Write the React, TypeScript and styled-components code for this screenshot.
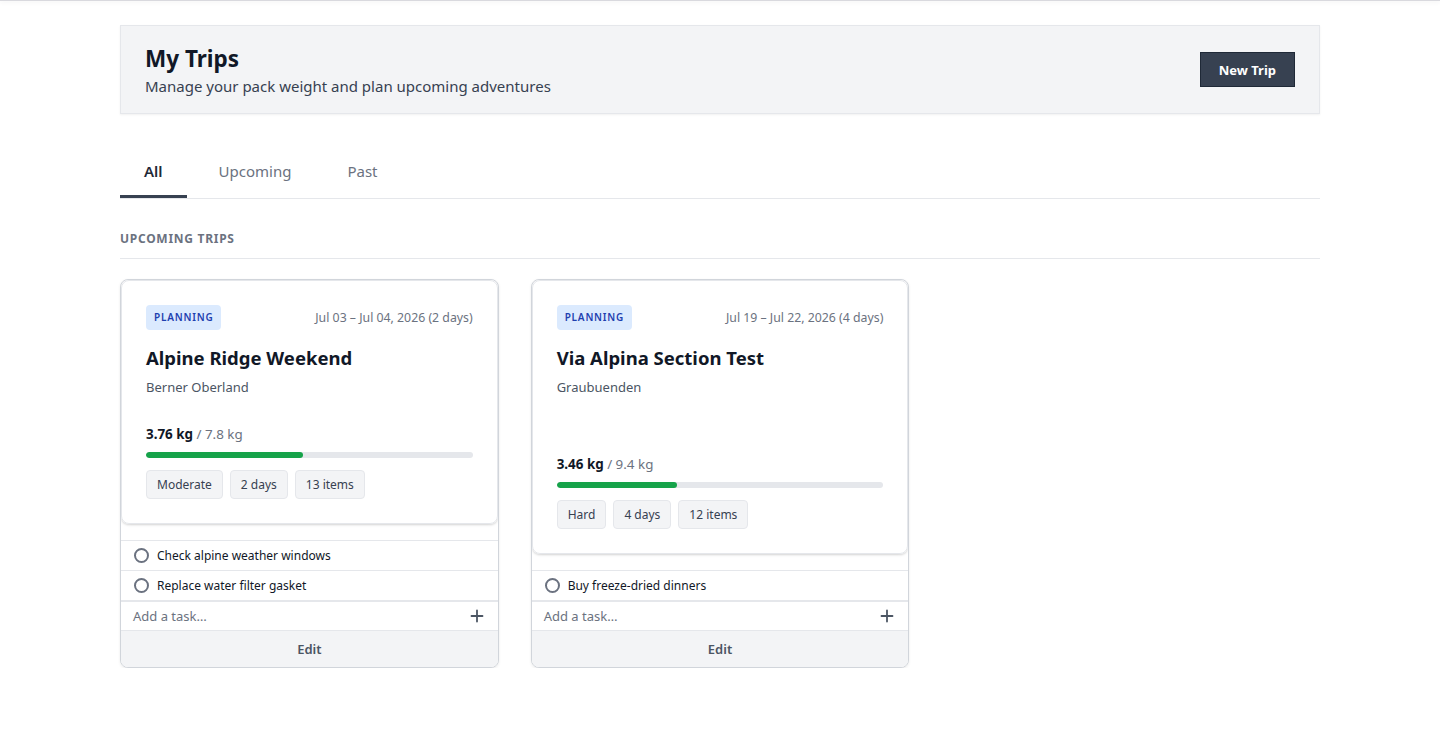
import React from "react";
import styled, { createGlobalStyle } from "styled-components";

const GlobalStyle = createGlobalStyle`
  * { box-sizing: border-box; }
  html, body { margin: 0; padding: 0; background: #ffffff; }
  body {
    font-family: "Segoe UI", "Noto Sans", "Open Sans", sans-serif;
    color: #111827;
  }
`;

const TopBar = styled.div`
  height: 1px;
  background: #d9d9de;
  box-shadow: 0 1px 4px rgba(0, 0, 0, 0.12);
`;

const Page = styled.main`
  width: 1200px;
  margin: 0 auto;
  padding-top: 24px;
`;

const HeaderBox = styled.header`
  display: flex;
  align-items: center;
  justify-content: space-between;
  height: 89px;
  background: #f3f4f6;
  border: 1px solid #e5e7eb;
  box-shadow: 0 1px 2px rgba(0, 0, 0, 0.06);
  padding: 0 24px;
`;

const HeaderText = styled.div`
  padding-top: 2px;
`;

const Title = styled.h1`
  margin: 0;
  font-size: 22.5px;
  line-height: 30px;
  font-weight: 700;
  color: #111827;
`;

const Subtitle = styled.p`
  margin: 0;
  font-size: 15px;
  line-height: 24px;
  color: #374151;
`;

const PrimaryButton = styled.button`
  height: 35px;
  padding: 0 18px;
  background: #374151;
  border: 1px solid #1f2937;
  color: #ffffff;
  font-family: inherit;
  font-size: 13px;
  font-weight: 700;
  cursor: pointer;
`;

const Tabs = styled.nav`
  display: flex;
  gap: 8px;
  margin-top: 32px;
  border-bottom: 1px solid #e5e7eb;
`;

const Tab = styled.div<{ $active?: boolean }>`
  padding: 13px 24px 12px;
  font-size: 15px;
  line-height: 24px;
  font-weight: ${(p) => (p.$active ? 600 : 400)};
  color: ${(p) => (p.$active ? "#1f2937" : "#6b7280")};
  border-bottom: 3px solid ${(p) => (p.$active ? "#374151" : "transparent")};
`;

const SectionTitle = styled.h2`
  margin: 32px 0 0;
  padding-bottom: 11px;
  border-bottom: 1px solid #e5e7eb;
  font-size: 12px;
  line-height: 16px;
  font-weight: 700;
  letter-spacing: 0.06em;
  text-transform: uppercase;
  color: #6b7280;
`;

const Grid = styled.div`
  display: grid;
  grid-template-columns: repeat(3, 1fr);
  gap: 32px;
  margin-top: 20px;
`;

const Card = styled.article`
  display: flex;
  flex-direction: column;
  border: 1px solid #d1d5db;
  border-radius: 8px;
  background: #ffffff;
  overflow: hidden;
  box-shadow: 0 1px 3px rgba(0, 0, 0, 0.08);
`;

const CardBody = styled.div`
  flex: 1;
  display: flex;
  flex-direction: column;
  padding: 24px;
  border: 1px solid #e5e7eb;
  border-radius: 8px;
  box-shadow: 0 1px 3px rgba(0, 0, 0, 0.12), 0 1px 2px rgba(0, 0, 0, 0.06);
`;

const TopRow = styled.div`
  display: flex;
  justify-content: space-between;
  align-items: center;
`;

const Badge = styled.span`
  display: inline-block;
  padding: 5px 8px;
  border-radius: 4px;
  background: #dbeafe;
  color: #1e40af;
  font-size: 10px;
  line-height: 15px;
  font-weight: 600;
  letter-spacing: 0.08em;
`;

const DateText = styled.span`
  font-size: 12.3px;
  color: #6b7280;
`;

const TripName = styled.h3`
  margin: 16px 0 0;
  font-size: 18.5px;
  line-height: 24px;
  font-weight: 700;
  color: #111827;
`;

const Location = styled.div`
  margin-top: 7px;
  font-size: 13px;
  line-height: 20px;
  color: #4b5563;
`;

const WeightBlock = styled.div`
  margin-top: auto;
  padding-top: 27px;
`;

const WeightLine = styled.div`
  font-size: 13.4px;
  line-height: 20px;
  color: #6b7280;
  strong {
    color: #111827;
    font-weight: 700;
  }
`;

const Bar = styled.div`
  margin-top: 8px;
  height: 6px;
  border-radius: 3px;
  background: #e5e7eb;
  overflow: hidden;
`;

const BarFill = styled.div`
  height: 100%;
  border-radius: 3px;
  background: #16a34a;
`;

const Chips = styled.div`
  display: flex;
  gap: 7px;
  margin-top: 12px;
`;

const Chip = styled.span`
  display: inline-flex;
  align-items: center;
  height: 29px;
  padding: 0 10px;
  border: 1px solid #e5e7eb;
  border-radius: 4px;
  background: #f3f4f6;
  font-size: 12px;
  color: #374151;
`;

const TaskList = styled.div`
  padding-top: 16px;
`;

const TaskRow = styled.div`
  display: flex;
  align-items: center;
  gap: 8px;
  height: 30px;
  padding: 0 13px;
  border-top: 1px solid #e5e7eb;
  font-size: 12px;
  color: #111827;
`;

const Circle = styled.span`
  width: 15px;
  height: 15px;
  border-radius: 50%;
  border: 2px solid #6b7280;
  flex-shrink: 0;
`;

const AddRow = styled.div`
  display: flex;
  align-items: center;
  justify-content: space-between;
  height: 30px;
  padding: 0 14px 0 12px;
  border-top: 2px solid #e5e7eb;
  font-size: 13px;
  color: #6b7280;
`;

const EditFooter = styled.div`
  height: 37px;
  display: flex;
  align-items: center;
  justify-content: center;
  background: #f3f4f6;
  border-top: 1px solid #e5e7eb;
  font-size: 13px;
  font-weight: 600;
  color: #4b5563;
`;

const PlusIcon = () => (
  <svg width="14" height="14" viewBox="0 0 14 14" fill="none" stroke="#4b5563" strokeWidth="1.8" strokeLinecap="round">
    <path d="M7 1.5v11M1.5 7h11" />
  </svg>
);

type Trip = {
  name: string;
  location: string;
  dates: string;
  weight: string;
  max: string;
  pct: number;
  chips: string[];
  tasks: string[];
};

const trips: Trip[] = [
  {
    name: "Alpine Ridge Weekend",
    location: "Berner Oberland",
    dates: "Jul 03 – Jul 04, 2026 (2 days)",
    weight: "3.76 kg",
    max: "7.8 kg",
    pct: (3.76 / 7.8) * 100,
    chips: ["Moderate", "2 days", "13 items"],
    tasks: ["Check alpine weather windows", "Replace water filter gasket"],
  },
  {
    name: "Via Alpina Section Test",
    location: "Graubuenden",
    dates: "Jul 19 – Jul 22, 2026 (4 days)",
    weight: "3.46 kg",
    max: "9.4 kg",
    pct: (3.46 / 9.4) * 100,
    chips: ["Hard", "4 days", "12 items"],
    tasks: ["Buy freeze-dried dinners"],
  },
];

const TripCard = ({ trip }: { trip: Trip }) => (
  <Card>
    <CardBody>
      <TopRow>
        <Badge>PLANNING</Badge>
        <DateText>{trip.dates}</DateText>
      </TopRow>
      <TripName>{trip.name}</TripName>
      <Location>{trip.location}</Location>
      <WeightBlock>
        <WeightLine>
          <strong>{trip.weight}</strong> / {trip.max}
        </WeightLine>
        <Bar>
          <BarFill style={{ width: `${trip.pct}%` }} />
        </Bar>
        <Chips>
          {trip.chips.map((c) => (
            <Chip key={c}>{c}</Chip>
          ))}
        </Chips>
      </WeightBlock>
    </CardBody>
    <TaskList>
      {trip.tasks.map((t) => (
        <TaskRow key={t}>
          <Circle />
          {t}
        </TaskRow>
      ))}
    </TaskList>
    <AddRow>
      <span>Add a task…</span>
      <PlusIcon />
    </AddRow>
    <EditFooter>Edit</EditFooter>
  </Card>
);

export default function App() {
  return (
    <>
      <GlobalStyle />
      <TopBar />
      <Page>
        <HeaderBox>
          <HeaderText>
            <Title>My Trips</Title>
            <Subtitle>Manage your pack weight and plan upcoming adventures</Subtitle>
          </HeaderText>
          <PrimaryButton>New Trip</PrimaryButton>
        </HeaderBox>
        <Tabs>
          <Tab $active>All</Tab>
          <Tab>Upcoming</Tab>
          <Tab>Past</Tab>
        </Tabs>
        <SectionTitle>Upcoming Trips</SectionTitle>
        <Grid>
          {trips.map((t) => (
            <TripCard key={t.name} trip={t} />
          ))}
        </Grid>
      </Page>
    </>
  );
}
